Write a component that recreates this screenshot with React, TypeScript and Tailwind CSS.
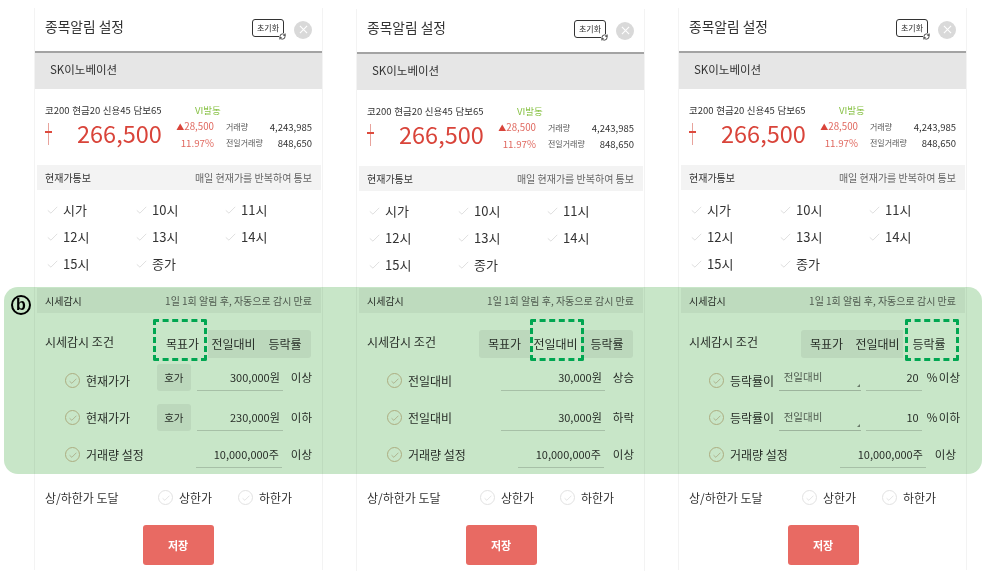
import React from "react";
import { RefreshCw } from "lucide-react";

const Check = ({ className = "" }: { className?: string }) => (
  <svg viewBox="0 0 14 10" className={className} fill="none" stroke="currentColor" strokeWidth="1">
    <path d="M1 5.5 L5 9 L13 1" />
  </svg>
);

const CircleCheck = ({ warm = false }: { warm?: boolean }) => (
  <span className={`w-[15px] h-[15px] shrink-0 rounded-full border flex items-center justify-center ${warm ? "border-[#dcc0a4] text-[#c49f80]" : "border-[#e2e2e2] text-[#cfcfcf]"}`}>
    <Check className="w-[8px] h-[6px]" />
  </span>
);

const Under = ({ w, children, cls = "" }: { w: string; children?: React.ReactNode; cls?: string }) => (
  <div className={`${w} ${cls} shrink-0 h-[27px] border-b border-[#d5d5d5] flex items-center justify-end text-[11px] text-[#333] pr-[3px] whitespace-nowrap`}>{children}</div>
);

const Hoga = () => (
  <div className="w-[34px] h-[27px] rounded-[3px] bg-[#f0f0f0] text-[10.5px] text-[#333] flex items-center justify-center">호가</div>
);

const Select = () => (
  <div className="relative shrink-0 w-[82px] h-[27px] border-b border-[#c8c8c8] text-[10.5px] text-[#666] flex items-center pl-[5px]">
    전일대비
    <span className="absolute right-[1px] bottom-[3px] w-0 h-0 border-l-[3px] border-b-[3px] border-l-transparent border-b-[#888]" />
  </div>
);

const Time = ({ t }: { t: string }) => (
  <div className="flex items-center w-[89px]">
    <Check className="w-[11px] h-[8px] text-[#d6d6d6] mr-[5px]" />
    <span className="text-[13px] text-[#333]">{t}</span>
  </div>
);

type Mode = 0 | 1 | 2;

const Row = ({ label, shift = "", children }: { label: string; shift?: string; children: React.ReactNode }) => (
  <div className="h-[37px] flex items-center pl-[30px] pr-[10px]">
    <CircleCheck warm />
    <span className="ml-[6px] flex-1 text-[12px] text-[#333] whitespace-nowrap">{label}</span>
    <div className={`flex items-center ${shift}`}>{children}</div>
  </div>
);

const Suffix = ({ children }: { children: React.ReactNode }) => (
  <span className="text-[11.5px] text-[#333] whitespace-nowrap [word-spacing:-1px]">{children}</span>
);

const Panel = ({ mode, lowered = false }: { mode: Mode; lowered?: boolean }) => {
  const tabs = ["목표가", "전일대비", "등락률"];
  const widths = ["w-[51px]", "w-[51px]", "w-[52px]"];
  const dash = ["left-[-4px]", "left-[0px]", "left-[2px]"];
  return (
    <div className={`w-[289px] h-[562px] border-x border-[#f3f3f3] bg-white flex flex-col ${lowered ? "mt-[1px]" : ""}`}>
      <div className="h-[45px] border-b-2 border-[#a3a3a3] flex items-center pl-[10px] pr-[10px]">
        <span className="flex-1 text-[13.75px] text-[#333] mb-[6px]">종목알림 설정</span>
        <div className="relative w-[32px] h-[18px] border-[1.5px] border-[#333] rounded-[3px] text-[8px] text-[#333] flex items-center justify-center mb-[4px]">
          초기화
          <span className="absolute -right-[3px] -bottom-[4px] w-[7px] h-[7px] bg-white flex items-center justify-center">
            <RefreshCw className="w-[7px] h-[7px]" strokeWidth={3} />
          </span>
        </div>
        <div className="ml-[10px] w-[18px] h-[18px] rounded-full bg-[#d9d9d9] text-white flex items-center justify-center">
          <svg viewBox="0 0 10 10" className="w-[9px] h-[9px]" stroke="currentColor" strokeWidth="1.2"><path d="M1 1 L9 9 M9 1 L1 9" /></svg>
        </div>
      </div>
      <div className="h-[36px] bg-[#e6e6e6] flex items-center pl-[15px] pb-[3px] text-[11.5px] text-[#333]">SK이노베이션</div>
      <div className="h-[76px] pl-[10px] pr-[10px] pt-[14px]">
        <div className="flex items-center h-[14px] text-[9.5px] text-[#333]">
          <span className="w-[150px] whitespace-nowrap [word-spacing:0.5px]">코200 현금20 신용45 담보65</span>
          <span className="text-[#8bc34a]">VI발동</span>
        </div>
        <div className="flex items-center -mt-[2px]">
          <div className="relative w-[7px] h-[22px] flex justify-center mt-[2px]">
            <span className="w-[1.5px] h-full bg-[#e8a39c]" />
            <span className="absolute top-[8px] left-0 w-[7px] h-[1.5px] bg-[#dd4b3e]" />
          </div>
          <span className="ml-[25px] w-[84px] text-[23.5px] leading-[30px] text-[#d9443a] whitespace-nowrap">266,500</span>
          <div className="w-[53px] text-right text-[9.75px] leading-[16px] text-[#e0685f] mt-[3px]">
            <div className="whitespace-nowrap">
              <span className="text-[#d9443a] text-[8px]">▲</span>28,500
            </div>
            <div>11.97%</div>
          </div>
          <div className="ml-[12px] flex-1 text-[8px] leading-[16px] text-[#555] mt-[3px]">
            <div className="flex justify-between items-center">
              <span>거래량</span>
              <span className="text-[9.5px] text-[#333]">4,243,985</span>
            </div>
            <div className="flex justify-between items-center">
              <span>전일거래량</span>
              <span className="text-[9.5px] text-[#333]">848,650</span>
            </div>
          </div>
        </div>
      </div>
      <div className="h-[25px] ml-[2px] mr-px bg-[#f3f3f3] flex items-center justify-between pl-[8px] pr-[9px] text-[10px]">
        <span className="text-[#333]">현재가통보</span>
        <span className="text-[#666]">매일 현재가를 반복하여 통보</span>
      </div>
      <div className={`pt-[6px] pl-[12px] ${lowered ? "h-[97px]" : "h-[98px]"}`}>
        {[["시가", "10시", "11시"], ["12시", "13시", "14시"], ["15시", "종가"]].map((r, i) => (
          <div key={i} className="h-[27px] flex items-center">
            {r.map((t) => <Time key={t} t={t} />)}
          </div>
        ))}
      </div>
      <div className="h-[25px] ml-[2px] mr-px bg-[#f3f3f3] flex items-center justify-between pl-[8px] pr-[9px] text-[10px]">
        <span className="text-[#333]">시세감시</span>
        <span className="text-[#666]">1일 1회 알림 후, 자동으로 감시 만료</span>
      </div>
      <div className="h-[41px] mt-[8px] pt-[9px] flex items-start pl-[10px]">
        <span className="w-[112px] text-[12px] leading-[24px] text-[#333]">시세감시 조건</span>
        <div className="flex h-[28px] rounded-[3px] bg-[#f0f0f0]">
          {tabs.map((t, i) => (
            <div key={t} className={`relative ${widths[i]} flex items-center justify-center text-[12px] text-[#333] whitespace-nowrap ${i === mode ? "bg-white" : ""}`}>
              {t}
              {i === mode && (
                <span className={`absolute z-20 -top-[11px] ${dash[i]} w-[54px] h-[42px] border-[3px] border-dashed border-[#00a651] rounded-[2px]`} />
              )}
            </div>
          ))}
        </div>
      </div>
      {mode === 0 && (
        <>
          <Row label="현재가가" shift="mb-[6px]">
            <Hoga />
            <Under w="w-[86px]" cls="ml-[6px] mr-[8px]">300,000원</Under>
            <Suffix>이상</Suffix>
          </Row>
          <Row label="현재가가">
            <Hoga />
            <Under w="w-[86px]" cls="ml-[6px] mr-[8px]">230,000원</Under>
            <Suffix>이하</Suffix>
          </Row>
        </>
      )}
      {mode === 1 && (
        <>
          <Row label="전일대비" shift="mb-[6px]">
            <Under w="w-[104px]" cls="mr-[8px]">30,000원</Under>
            <Suffix>상승</Suffix>
          </Row>
          <Row label="전일대비">
            <Under w="w-[104px]" cls="mr-[8px]">30,000원</Under>
            <Suffix>하락</Suffix>
          </Row>
        </>
      )}
      {mode === 2 && (
        <>
          <Row label="등락률이" shift="mb-[6px] -mr-[4px]">
            <Select />
            <Under w="w-[56px]" cls="ml-[5px] mr-[5px]">20</Under>
            <Suffix>% 이상</Suffix>
          </Row>
          <Row label="등락률이" shift="-mr-[4px]">
            <Select />
            <Under w="w-[56px]" cls="ml-[5px] mr-[5px]">10</Under>
            <Suffix>% 이하</Suffix>
          </Row>
        </>
      )}
      <Row label="거래량 설정">
        <Under w="w-[86px]" cls="mr-[9px]">10,000,000주</Under>
        <Suffix>이상</Suffix>
      </Row>
      <div className="h-[43px] mt-[3px] flex items-center pl-[10px]">
        <span className="w-[113px] text-[12px] text-[#333]">상/하한가 도달</span>
        <CircleCheck />
        <span className="ml-[6px] w-[59px] text-[12px] text-[#333]">상한가</span>
        <CircleCheck />
        <span className="ml-[6px] text-[12px] text-[#333]">하한가</span>
      </div>
      <div className={`flex justify-center mt-[6px] ${mode === 0 ? "pr-px" : "pl-px"}`}>
        <div className="w-[71px] h-[40px] rounded-[3px] bg-[#e86a63] text-white text-[11px] font-bold flex items-center justify-center">저장</div>
      </div>
    </div>
  );
};

export default function App() {
  return (
    <div className="relative w-[987px] h-[576px] bg-white overflow-hidden blur-[0.5px] font-['Noto_Sans_CJK_KR','Noto_Sans',sans-serif]">
      <div className="flex pl-[34px] gap-[33px] pt-[8px]">
        <Panel mode={0} />
        <Panel mode={1} lowered />
        <Panel mode={2} />
      </div>
      <div className="absolute z-10 left-[4px] top-[287px] w-[978px] h-[187px] rounded-[14px] bg-[#c8e6c8] mix-blend-multiply" />
      <div className="absolute z-20 left-[11px] top-[295px] w-[20px] h-[20px] rounded-full border-2 border-black flex items-center justify-center text-[16px] leading-none font-bold text-black font-['Liberation_Sans',sans-serif] pb-[1px]">b</div>
    </div>
  );
}
